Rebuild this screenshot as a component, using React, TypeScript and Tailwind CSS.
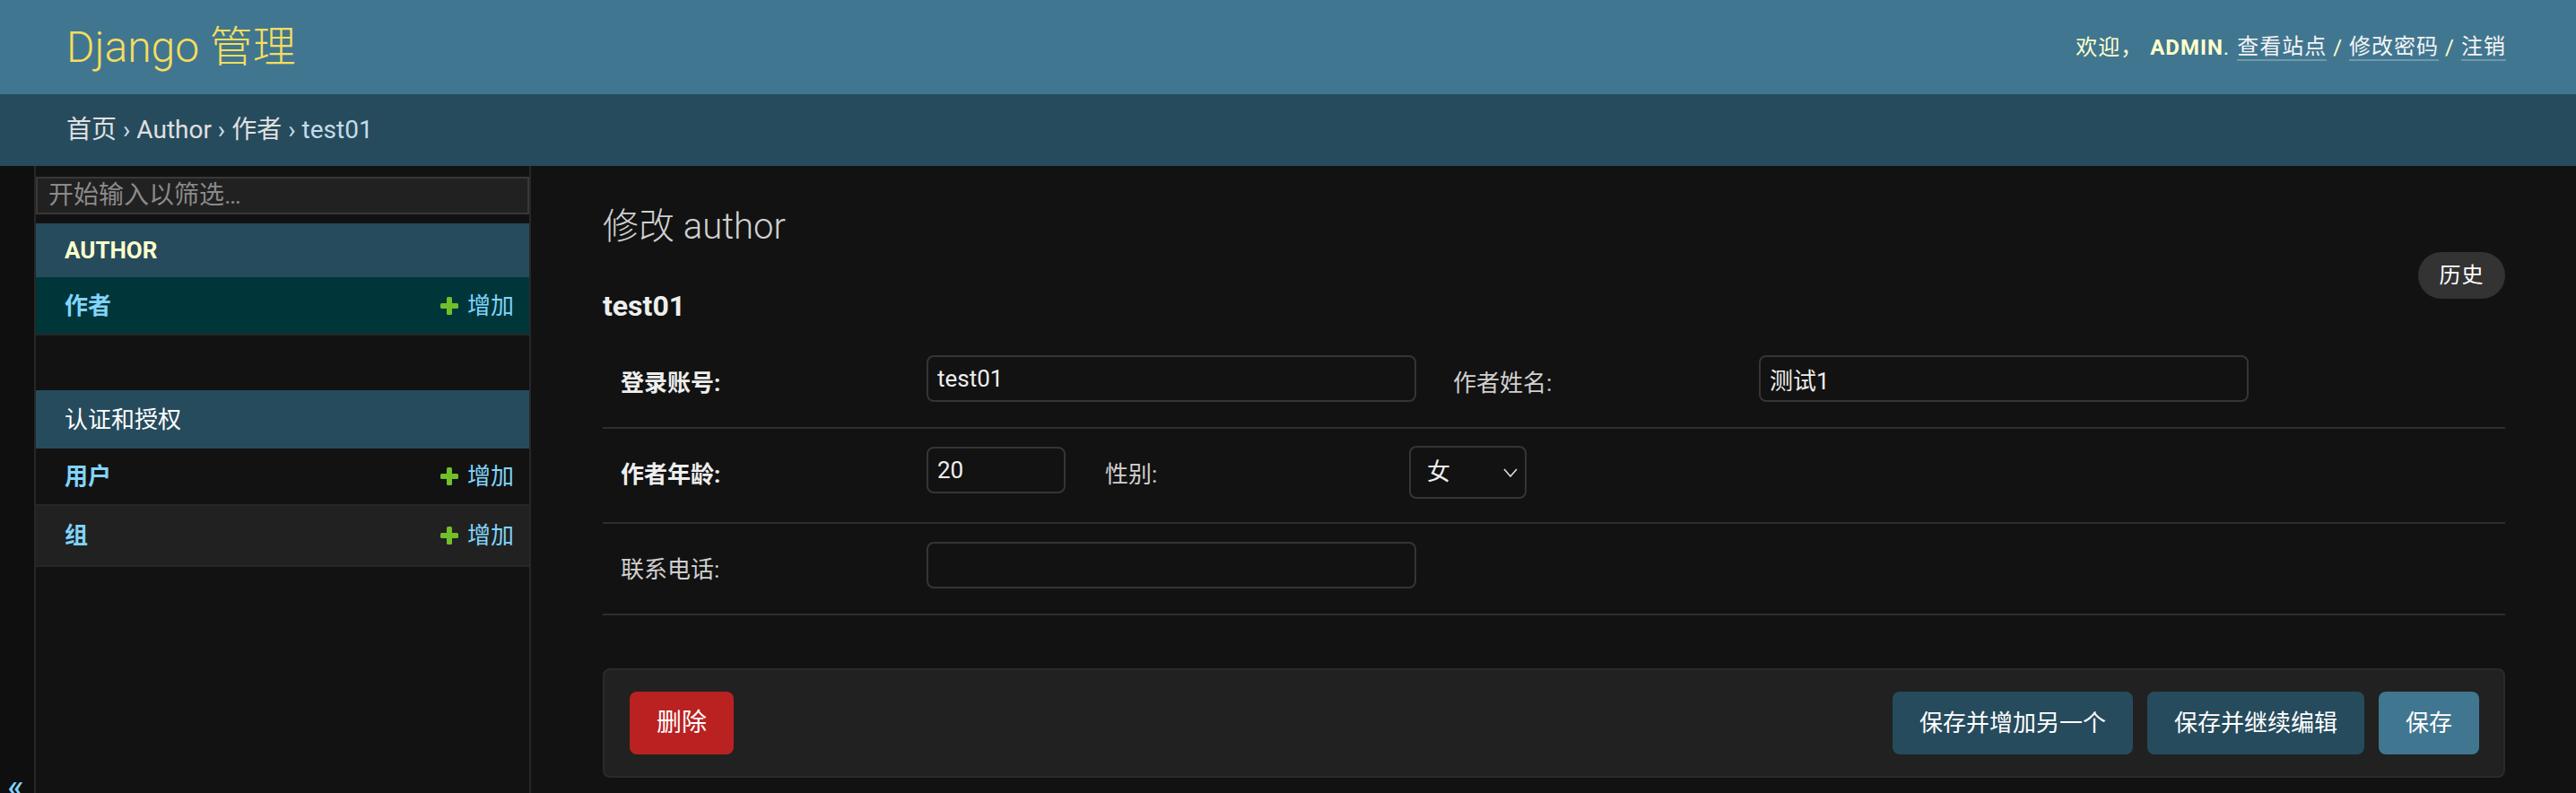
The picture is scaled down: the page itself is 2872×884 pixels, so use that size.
const linkBlue = 'text-[#81d4fa]';

const PlusIcon = () => (
  <svg width="20" height="20" viewBox="0 0 20 20" className="shrink-0">
    <rect x="7" y="0" width="6" height="20" rx="1.5" fill="#70bf2b" />
    <rect x="0" y="7" width="20" height="6" rx="1.5" fill="#70bf2b" />
  </svg>
);

const Header = () => (
  <header className="flex h-[105px] items-center justify-between bg-[#417690] pl-[74px] pr-[78px]">
    <h1 className="text-[48px] font-light leading-[56px] text-[#f5dd5d]">Django 管理</h1>
    <div className="flex items-center text-[24px] leading-[28px] tracking-[1px] text-[#ffffcc]">
      <span>欢迎，</span>
      <strong className="ml-[8px] font-bold">ADMIN</strong>
      <span>.</span>
      <a className="ml-[8px] border-b-2 border-white/25 text-[#f5f5f5]">查看站点</a>
      <span className="mx-[7px]">/</span>
      <a className="border-b-2 border-white/25 text-[#f5f5f5]">修改密码</a>
      <span className="mx-[7px]">/</span>
      <a className="border-b-2 border-white/25 text-[#f5f5f5]">注销</a>
    </div>
  </header>
);

const Breadcrumbs = () => (
  <nav className="flex h-[80px] items-center bg-[#264b5d] pl-[74px] text-[28px] leading-[32px] text-[#c4dce8]">
    <a className="text-[#e0e0e0]">首页</a>
    <span className="whitespace-pre"> › </span>
    <a className="text-[#e0e0e0]">Author</a>
    <span className="whitespace-pre"> › </span>
    <a className="text-[#e0e0e0]">作者</a>
    <span className="whitespace-pre"> › </span>
    <span>test01</span>
  </nav>
);

const SidebarRow = ({ name, className }: { name: string; className: string }) => (
  <div
    className={`flex items-center justify-between border-b-2 border-[#272727] pl-[32px] pr-[17px] text-[26px] leading-[30px] ${className}`}
  >
    <a className={`font-bold ${linkBlue}`}>{name}</a>
    <a className={`flex items-center gap-[10px] ${linkBlue}`}>
      <PlusIcon />
      增加
    </a>
  </div>
);

const Sidebar = () => (
  <aside className="w-[552px] shrink-0 border-r-2 border-[#272727] bg-[#121212] pt-[12px]">
    <input
      className="block h-[42px] w-full border-2 border-[#383838] bg-[#212121] px-[12px] text-[28px] text-[#eeeeee] outline-none placeholder:text-[#8a8a8a]"
      placeholder="开始输入以筛选…"
    />
    <div className="mt-[10px] flex h-[60px] items-center bg-[#264b5d] pl-[32px] text-[26px] font-bold leading-[30px] text-[#ffffcc]">
      AUTHOR
    </div>
    <SidebarRow name="作者" className="h-[65px] bg-[#00363a]" />
    <div className="mt-[61px] flex h-[65px] items-center bg-[#264b5d] pl-[32px] text-[26px] leading-[30px] text-white">
      认证和授权
    </div>
    <SidebarRow name="用户" className="h-[64px] bg-[#121212]" />
    <SidebarRow name="组" className="h-[68px] bg-[#212121]" />
  </aside>
);

const inputCls =
  'h-[52px] shrink-0 rounded-[8px] border-2 border-[#353535] bg-[#121212] px-[10px] text-[26px] text-[#eeeeee] outline-none';

const Label = ({ text, bold, width }: { text: string; bold?: boolean; width: string }) => (
  <label
    className={`shrink-0 pt-[18px] text-[26px] leading-[26px] ${width} ${
      bold ? 'font-bold text-[#eeeeee]' : 'text-[#d0d0d0]'
    }`}
  >
    {text}
  </label>
);

const Content = () => (
  <main className="min-w-0 flex-1 pl-[80px] pr-[79px] pt-[44px]">
    <h1 className="text-[40px] font-light leading-[48px] text-[#d0d0d0]">修改 author</h1>
    <div className="mt-[4px] flex items-start justify-between">
      <h2 className="mt-[40px] text-[32px] font-bold leading-[40px] text-[#eeeeee]">test01</h2>
      <a className="flex h-[52px] w-[97px] items-center justify-center rounded-full bg-[#333333] text-[24px] tracking-[1px] text-white">
        历史
      </a>
    </div>

    <div className="mt-[15px]">
      <div className="flex h-[102px] border-b-2 border-[#2e2e2e] pl-[20px] pt-[20px]">
        <Label text="登录账号:" bold width="w-[341px]" />
        <input className={`${inputCls} w-[546px]`} defaultValue="test01" readOnly />
        <div className="ml-[41px] flex">
          <Label text="作者姓名:" width="w-[341px]" />
          <input className={`${inputCls} w-[546px]`} defaultValue="测试1" readOnly />
        </div>
      </div>

      <div className="flex h-[106px] border-b-2 border-[#2e2e2e] pl-[20px] pt-[20px]">
        <Label text="作者年龄:" bold width="w-[341px]" />
        <input className={`${inputCls} w-[155px]`} defaultValue="20" readOnly />
        <div className="ml-[44px] flex">
          <Label text="性别:" width="w-[339px]" />
          <div className="-mt-[1px] flex h-[59px] w-[131px] items-center justify-between rounded-[8px] border-2 border-[#353535] bg-[#121212] pl-[18px] pr-[8px] text-[26px] text-[#eeeeee]">
            <span>女</span>
            <svg width="16" height="10" viewBox="0 0 16 10">
              <polyline points="1,1 8,9 15,1" fill="none" stroke="#dddddd" strokeWidth="1.6" />
            </svg>
          </div>
        </div>
      </div>

      <div className="flex h-[102px] border-b-2 border-[#2e2e2e] pl-[20px] pt-[20px]">
        <Label text="联系电话:" width="w-[341px]" />
        <input className={`${inputCls} w-[546px]`} defaultValue="" readOnly />
      </div>
    </div>

    <div className="mt-[59px] flex h-[122px] items-center justify-between rounded-[8px] border-2 border-[#2a2a2a] bg-[#212121] pl-[28px] pr-[27px]">
      <a className="flex h-[70px] w-[116px] items-center justify-center rounded-[8px] bg-[#ba2121] text-[28px] text-white">
        删除
      </a>
      <div className="flex gap-[16px]">
        <button className="h-[70px] rounded-[8px] bg-[#264b5d] px-[30px] text-[26px] text-white">
          保存并增加另一个
        </button>
        <button className="h-[70px] rounded-[8px] bg-[#264b5d] px-[30px] text-[26px] text-white">
          保存并继续编辑
        </button>
        <button className="h-[70px] rounded-[8px] bg-[#417690] px-[30px] text-[26px] text-white">
          保存
        </button>
      </div>
    </div>
  </main>
);

export default function App() {
  return (
    <div className="h-[884px] overflow-hidden bg-[#121212] font-['Roboto','Noto_Sans_CJK_SC',sans-serif] text-[#eeeeee]">
      <Header />
      <Breadcrumbs />
      <div className="flex h-[699px] overflow-hidden">
        <div className="w-[40px] shrink-0 border-r-2 border-[#272727] bg-[#0f0f0f] pl-[8px] pt-[673px] text-[40px] leading-[40px] text-[#81d4fa]">
          «
        </div>
        <Sidebar />
        <Content />
      </div>
    </div>
  );
}
